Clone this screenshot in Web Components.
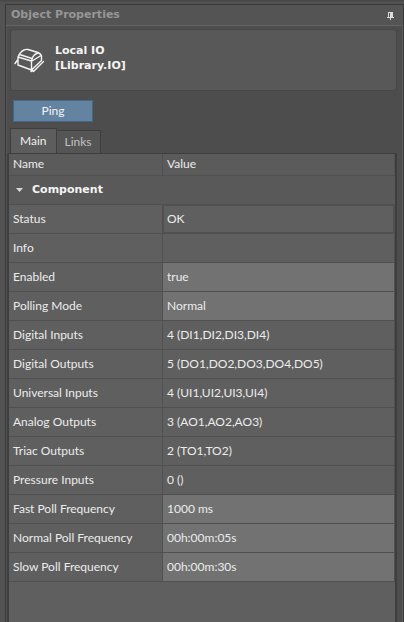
<!DOCTYPE html>
<html lang="en">
<head>
<meta charset="utf-8">
<title>Object Properties</title>
<style>
html, body { height: 100%; margin: 0; }
body { background: #4d4d4d; color: #ececec; font: 12px/16px Lato, "Open Sans", sans-serif; overflow: hidden; }
</style>
</head>
<body>
<properties-panel heading="Object Properties">
  <object-card name="Local IO" path="[Library.IO]"></object-card>
  <action-button>Ping</action-button>
  <tab-strip></tab-strip>
  <property-table></property-table>
</properties-panel>
<script>
function define(tag, html, setup) {
  const template = document.createElement('template');
  template.innerHTML = html;
  customElements.define(tag, class extends HTMLElement {
    connectedCallback() {
      if (this.shadowRoot) return;
      this.attachShadow({ mode: 'open' }).append(template.content.cloneNode(true));
      if (setup) setup(this, this.shadowRoot);
    }
  });
}

define('properties-panel', `
<style>
:host { display: flex; box-sizing: border-box; height: 100vh; padding: 4px 0 0 5px; background: linear-gradient(#484848 1px, #535353 2px, #505050 4px) 0 0 / 100% 4px no-repeat, #535353; }
section { flex: 1; display: flex; flex-direction: column; min-width: 0; border: solid #393939; border-width: 1px 1px 0; box-shadow: inset 1px 0 #555, inset -1px 0 #5b5b5b; background: #4d4d4d; }
header { display: flex; align-items: center; justify-content: space-between; height: 20px; padding: 0 9px 0 5px; border-bottom: 1px solid #656565; background: #545454; }
h1 { margin: 0; font: bold 11px/18px "DejaVu Sans", sans-serif; color: #969696; }
button { display: flex; padding: 0; border: 0; background: none; }
.body { flex: 1; display: flex; flex-direction: column; min-height: 0; padding: 4px 6px 0 1px; }
</style>
<section>
  <header><h1></h1>
    <button aria-label="Pin panel"><svg width="8" height="9" viewBox="0 0 8 9" shape-rendering="crispEdges"><path fill="#dcdcdc" d="M2 1H7V6H8V7H5V9H4V7H1V6H2Z"/><path fill="#555" d="M3 2H4V6H3Z"/></svg></button>
  </header>
  <div class="body"><slot></slot></div>
</section>`, (el, root) => { root.querySelector('h1').textContent = el.getAttribute('heading'); });

define('object-card', `
<style>
:host { display: flex; align-items: center; gap: 11px; box-sizing: border-box; height: 60px; margin: 0 1px 10px 4px; padding: 0 3px 4px; border-radius: 2px; background: #585858; box-shadow: 0 0 0 1px #474747; font: bold 11px/15px "DejaVu Sans", sans-serif; color: #f4f4f4; }
svg { margin-top: 4px; }
p { margin: 0; }
</style>
<svg width="30" height="25" viewBox="0 0 30 25" fill="none" stroke="#f4f4f4" stroke-width="1.4" stroke-linejoin="round" stroke-linecap="round"><path d="M4 9 V17 L17.500 22 V13 L4 9 Q6 4 10 2 Q12 1 14 1.500 L24 4.500 Q27 6 27.500 8 V12.500 L17.500 22 M5.500 6.500 L18 10.500 Q20 6 24 5 M17.500 13 Q17.500 11 18.500 10.500 M18 13 L27 7.500 M1 15.500 L3.500 12 M17 23.500 L19 22.500 M19.500 23.500 L29.500 13.500"/></svg>
<div><p class="name"></p><p class="path"></p></div>`, (el, root) => {
  root.querySelector('.name').textContent = el.getAttribute('name');
  root.querySelector('.path').textContent = el.getAttribute('path');
});

define('action-button', `
<style>
:host { display: flex; margin: 0 0 6px 6px; }
button { width: 80px; height: 22px; padding: 0; border: 1px solid #436689; background: #6483a1; color: #f4f4f4; font: inherit; }
</style>
<button><slot></slot></button>`);

define('tab-strip', `
<style>
:host { display: flex; align-items: flex-end; padding-left: 3px; }
button { box-sizing: border-box; height: 23px; padding: 0 8px; border: 1px solid #3e3e3e; border-left: 0; border-bottom: 0; background: #555; color: #c2c2c2; font: inherit; }
button[aria-selected=true] { height: 25px; padding: 0 9px; border-left: 1px solid #3e3e3e; background: #5d5d5d; color: #f0f0f0; }
div { display: flex; align-items: flex-end; }
</style>
<div role="tablist"><button role="tab" aria-selected="true">Main</button><button role="tab" aria-selected="false">Links</button></div>`);

const rows = [
  ['Status', 'OK', 'boxed'],
  ['Info', ''],
  ['Enabled', 'true', 'select'],
  ['Polling Mode', 'Normal', 'select'],
  ['Digital Inputs', '4 (DI1,DI2,DI3,DI4)'],
  ['Digital Outputs', '5 (DO1,DO2,DO3,DO4,DO5)'],
  ['Universal Inputs', '4 (UI1,UI2,UI3,UI4)'],
  ['Analog Outputs', '3 (AO1,AO2,AO3)'],
  ['Triac Outputs', '2 (TO1,TO2)'],
  ['Pressure Inputs', '0 ()'],
  ['Fast Poll Frequency', '1000 ms', 'input'],
  ['Normal Poll Frequency', '00h:00m:05s', 'input'],
  ['Slow Poll Frequency', '00h:00m:30s', 'input']
];
define('property-table', `
<style>
:host { display: block; flex: 1; border: solid #3e3e3e; border-width: 1px 2px 0; background: #5f5f5f; }
table { width: 100%; table-layout: fixed; border-collapse: separate; border-spacing: 0; }
th, td { box-sizing: border-box; height: 29px; padding: 0 4px; text-align: left; font-weight: normal; border: solid #505050; border-width: 0 1px 1px 0; white-space: nowrap; }
th:first-child { width: 154px; }
thead th { height: 22px; padding-bottom: 2px; background: #5b5b5b; }
th.group { background: #595959; border-right: 0; font: bold 11px/16px "DejaVu Sans", sans-serif; }
.group button { display: flex; align-items: center; gap: 9px; padding: 0 0 0 3px; border: 0; background: none; color: #f4f4f4; font: inherit; }
.boxed { box-shadow: inset 0 0 0 1px #505050; }
td.edit { padding: 0; background: #727272; }
input, select { display: block; box-sizing: border-box; width: 100%; height: 28px; margin: 0; padding: 0 4px; border: 0; border-radius: 0; appearance: none; background: none; color: inherit; font: inherit; }
input { padding-bottom: 2px; }
</style>
<table>
<thead><tr><th scope="col">Name</th><th scope="col">Value</th></tr></thead>
<tbody><tr><th class="group" colspan="2"><button aria-expanded="true"><svg width="7" height="4" viewBox="0 0 7 4"><path fill="#d8d8d8" d="M0 0H7L3.5 4Z"/></svg>Component</button></th></tr></tbody>
</table>`, (el, root) => {
  const body = root.querySelector('tbody');
  rows.forEach(([name, value, kind], i) => {
    const tr = body.insertRow();
    const th = document.createElement('th');
    th.scope = 'row';
    tr.append(th);
    const td = tr.insertCell();
    if (kind === 'input' || kind === 'select') {
      const field = document.createElement(kind);
      const label = document.createElement('label');
      field.id = label.htmlFor = 'field-' + i;
      label.textContent = name;
      th.append(label);
      if (kind === 'select') field.add(new Option(value)); else field.value = value;
      td.className = 'edit';
      td.append(field);
    } else {
      th.textContent = name;
      td.textContent = value;
      if (kind) td.className = kind;
    }
  });
});
</script>
</body>
</html>
